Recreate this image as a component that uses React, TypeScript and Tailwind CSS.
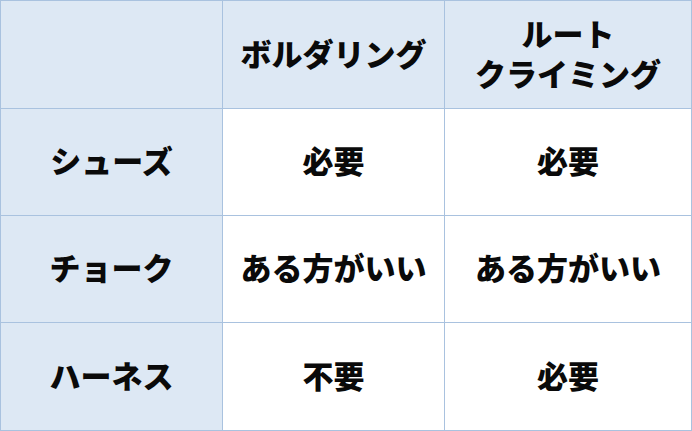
import React from "react";

const font = { fontFamily: '"Noto Sans CJK JP", "Noto Sans", sans-serif' };

function Cell({ children, head }: { children?: React.ReactNode; head?: boolean }) {
  return (
    <div
      className={`flex items-center justify-center pb-1 text-center font-black text-[31px] leading-[40px] text-[#0a0a0a] ${
        head ? "bg-[#dde8f4]" : "bg-white"
      }`}
    >
      {children}
    </div>
  );
}

export default function App() {
  return (
    <div
      className="w-[692px] h-[431px] bg-[#a9c2df] p-px grid grid-cols-[221px_221px_246px] grid-rows-[107px_106px_106px_107px] gap-px"
      style={font}
    >
      <Cell head />
      <Cell head>ボルダリング</Cell>
      <Cell head>
        <div>
          ルート
          <br />
          クライミング
        </div>
      </Cell>
      <Cell head>シューズ</Cell>
      <Cell>必要</Cell>
      <Cell>必要</Cell>
      <Cell head>チョーク</Cell>
      <Cell>ある方がいい</Cell>
      <Cell>ある方がいい</Cell>
      <Cell head>ハーネス</Cell>
      <Cell>不要</Cell>
      <Cell>必要</Cell>
    </div>
  );
}
